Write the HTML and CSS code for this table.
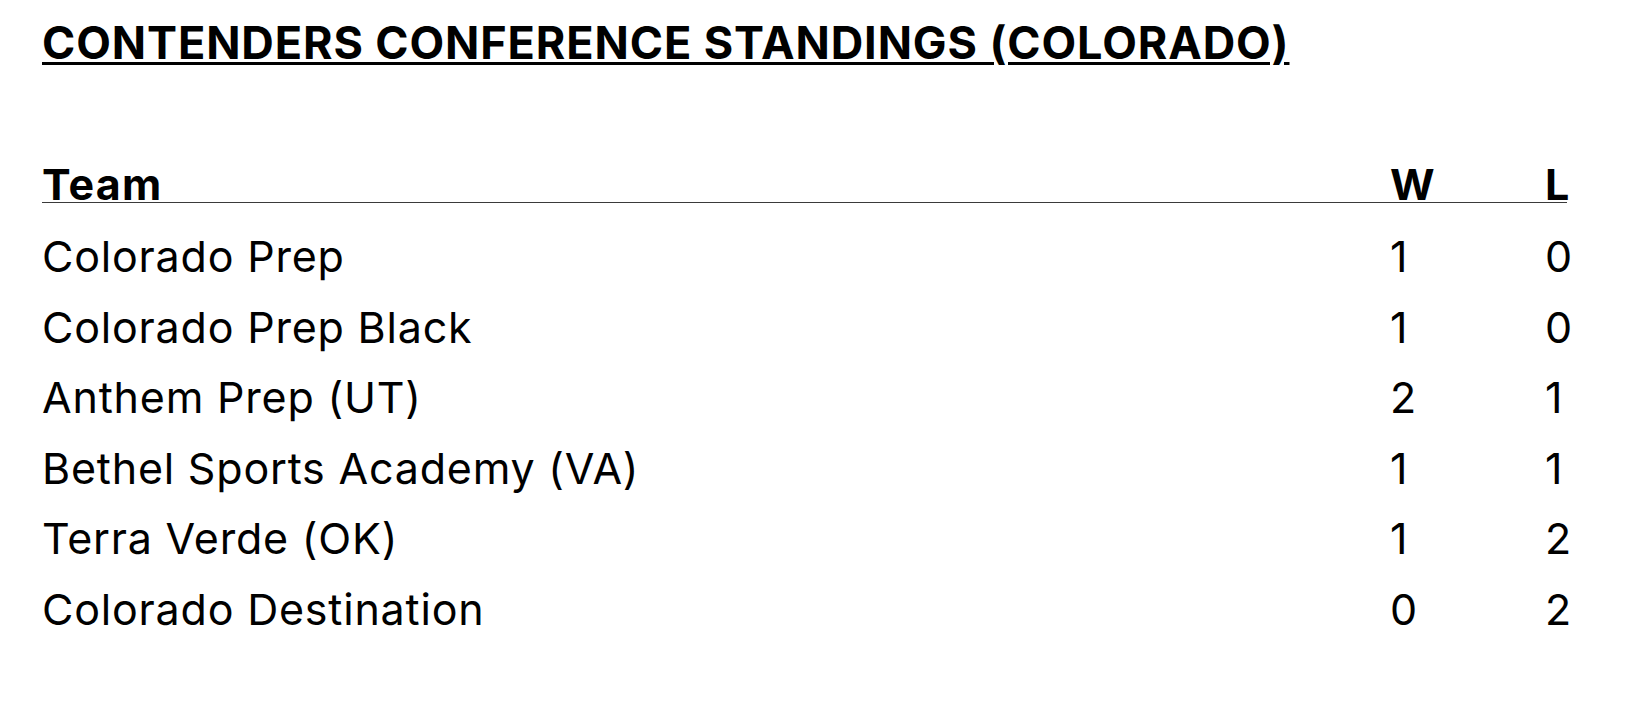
FILE: index.html
```html
<!DOCTYPE html>
<html>
<head>
<meta charset="utf-8">
<link rel="stylesheet" href="styles.css">
</head>
<body>
<div class="page">
  <h1 class="title">CONTENDERS CONFERENCE STANDINGS (COLORADO)</h1>
  <table class="standings">
    <colgroup>
      <col class="col-team">
      <col class="col-w">
      <col class="col-l">
    </colgroup>
    <thead>
      <tr><th>Team</th><th>W</th><th>L</th></tr>
    </thead>
    <tbody>
      <tr><td>Colorado Prep</td><td>1</td><td>0</td></tr>
      <tr><td>Colorado Prep Black</td><td>1</td><td>0</td></tr>
      <tr><td>Anthem Prep (UT)</td><td>2</td><td>1</td></tr>
      <tr><td>Bethel Sports Academy (VA)</td><td>1</td><td>1</td></tr>
      <tr><td>Terra Verde (OK)</td><td>1</td><td>2</td></tr>
      <tr><td>Colorado Destination</td><td>0</td><td>2</td></tr>
    </tbody>
  </table>
</div>
</body>
</html>
```

FILE: styles.css
```css
html, body {
  margin: 0;
  padding: 0;
  background: #ffffff;
}
body {
  font-family: "Inter", "Liberation Sans", sans-serif;
  color: #000000;
}
.page {
  padding: 16px 0 0 42px;
}
.title {
  margin: 0;
  font-size: 45px;
  font-weight: 700;
  letter-spacing: 0.9px;
  line-height: 54px;
  text-decoration: underline;
  text-decoration-thickness: 2.5px;
  text-underline-offset: 3px;
  white-space: nowrap;
}
.standings {
  margin-top: 97px;
  width: 1525px;
  table-layout: fixed;
  border-collapse: collapse;
  font-size: 43px;
  letter-spacing: 0.8px;
}
.col-team { width: 1348px; }
.col-w { width: 155px; }
.col-l { width: 22px; }
.standings th {
  font-weight: 700;
  letter-spacing: 1.2px;
  text-align: left;
  line-height: 35px;
  padding: 0;
  white-space: nowrap;
  border-bottom: 1.5px solid #3a3a3a;
}
.standings td {
  padding: 0;
  line-height: 70.5px;
  text-align: left;
  white-space: nowrap;
}
.standings tbody tr:first-child td {
  padding-top: 18px;
}
```
